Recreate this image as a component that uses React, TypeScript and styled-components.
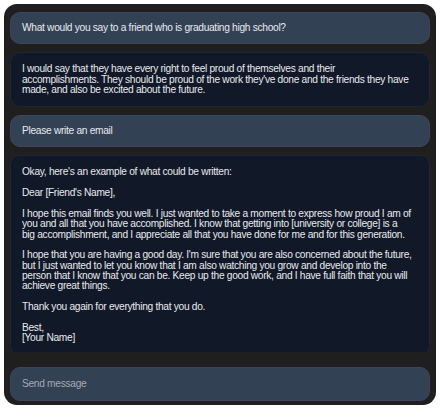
import React from 'react';
import styled, { createGlobalStyle } from 'styled-components';

const GlobalStyle = createGlobalStyle`
  html, body {
    margin: 0;
    padding: 0;
    background: #ffffff;
  }
  body {
    font-family: "Liberation Sans", Arial, sans-serif;
  }
`;

const Page = styled.div`
  width: 440px;
  height: 409px;
  padding: 4px;
  box-sizing: border-box;
`;

const Frame = styled.div`
  height: 100%;
  box-sizing: border-box;
  background: #1f1f1f;
  border-radius: 13px;
  padding: 8px 6px 4px;
  display: flex;
  flex-direction: column;
`;

const Thread = styled.div`
  flex: 1;
  display: flex;
  flex-direction: column;
  gap: 8px;
  overflow: hidden;
`;

const Bubble = styled.div<{ $user?: boolean; $fill?: boolean }>`
  flex: ${p => (p.$fill ? 1 : 'none')};
  background: ${p => (p.$user ? '#334155' : '#111827')};
  border: 1px solid ${p => (p.$user ? '#3a4659' : '#1e2636')};
  border-radius: 10px;
  padding: ${p => (p.$user ? '10px 11px' : '11px 11px')};
  color: #e8eaee;
  font-size: 10.2px;
  line-height: 10.3px;
  letter-spacing: -0.3px;
  white-space: nowrap;

  p {
    margin: 0 0 10.5px;
  }
  p:last-child {
    margin-bottom: 0;
  }
`;

const InputBox = styled.div`
  margin-top: 15px;
  background: #334155;
  border: 1px solid #3a4659;
  border-radius: 10px;
  padding: 11px 11px;
  color: #a3aab5;
  font-size: 10.2px;
  line-height: 10.3px;
  letter-spacing: -0.3px;
`;

const App: React.FC = () => {
  return (
    <Page>
      <GlobalStyle />
      <Frame>
        <Thread>
          <Bubble $user>What would you say to a friend who is graduating high school?</Bubble>
          <Bubble>
            I would say that they have every right to feel proud of themselves and their
            <br />
            accomplishments. They should be proud of the work they've done and the friends they have
            <br />
            made, and also be excited about the future.
          </Bubble>
          <Bubble $user>Please write an email</Bubble>
          <Bubble $fill>
            <p>Okay, here's an example of what could be written:</p>
            <p>Dear [Friend's Name],</p>
            <p>
              I hope this email finds you well. I just wanted to take a moment to express how proud I am of
              <br />
              you and all that you have accomplished. I know that getting into [university or college] is a
              <br />
              big accomplishment, and I appreciate all that you have done for me and for this generation.
            </p>
            <p>
              I hope that you are having a good day. I'm sure that you are also concerned about the future,
              <br />
              but I just wanted to let you know that I am also watching you grow and develop into the
              <br />
              person that I know that you can be. Keep up the good work, and I have full faith that you will
              <br />
              achieve great things.
            </p>
            <p>Thank you again for everything that you do.</p>
            <p>
              Best,
              <br />
              [Your Name]
            </p>
          </Bubble>
        </Thread>
        <InputBox>Send message</InputBox>
      </Frame>
    </Page>
  );
};

export default App;
